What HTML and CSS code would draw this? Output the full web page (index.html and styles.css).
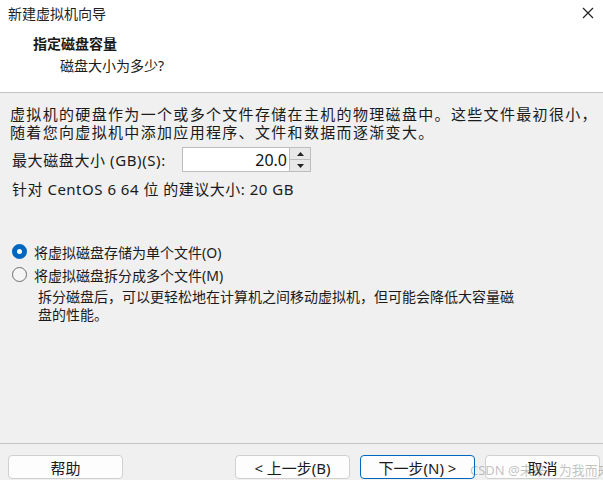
FILE: index.html
```html
<!DOCTYPE html>
<html lang="zh-CN">
<head>
  <meta charset="UTF-8">
  <title>新建虚拟机向导</title>
  <link rel="stylesheet" href="styles.css">
</head>
<body>
  <div class="dialog">
    <header class="top">
      <div class="titlebar">
        <span class="title">新建虚拟机向导</span>
        <svg class="close" width="12" height="12" viewBox="0 0 12 12">
          <path d="M1 1 L11 11 M11 1 L1 11" stroke="#222" stroke-width="1.2" fill="none"/>
        </svg>
      </div>
      <h1 class="heading">指定磁盘容量</h1>
      <p class="sub">磁盘大小为多少?</p>
    </header>

    <main class="content">
      <p class="intro">虚拟机的硬盘作为一个或多个文件存储在主机的物理磁盘中。这些文件最初很小，<br>随着您向虚拟机中添加应用程序、文件和数据而逐渐变大。</p>

      <div class="size-row">
        <label class="size-label">最大磁盘大小 (GB)(S):</label>
        <div class="spin">
          <input class="spin-input" type="text" value="20.0">
          <div class="spin-btns">
            <span class="spin-btn"><svg width="7" height="4" viewBox="0 0 7 4"><path d="M0 4 L3.5 0 L7 4 Z" fill="#222"/></svg></span>
            <span class="spin-btn"><svg width="7" height="4" viewBox="0 0 7 4"><path d="M0 0 L3.5 4 L7 0 Z" fill="#222"/></svg></span>
          </div>
        </div>
      </div>

      <p class="hint">针对 CentOS 6 64 位 的建议大小: 20 GB</p>

      <div class="options">
        <label class="radio">
          <span class="dot checked"></span>
          <span>将虚拟磁盘存储为单个文件(O)</span>
        </label>
        <label class="radio">
          <span class="dot"></span>
          <span>将虚拟磁盘拆分成多个文件(M)</span>
        </label>
        <p class="option-desc">拆分磁盘后，可以更轻松地在计算机之间移动虚拟机，但可能会降低大容量磁<br>盘的性能。</p>
      </div>
    </main>

    <footer class="footer">
      <button class="btn">帮助</button>
      <div class="spacer"></div>
      <button class="btn">&lt; 上一步(B)</button>
      <button class="btn primary">下一步(N) &gt;</button>
      <button class="btn">取消</button>
      <span class="watermark">CSDN @未来，为我而来</span>
    </footer>
  </div>
</body>
</html>
```

FILE: styles.css
```css
body {
  margin: 0;
  background: #f0f0f0;
  font-family: "Noto Sans", "Noto Sans CJK SC", sans-serif;
  color: #1a1a1a;
}

.dialog {
  width: 603px;
  height: 480px;
  display: flex;
  flex-direction: column;
  overflow: hidden;
}

/* top white area */
.top {
  background: #fff;
  height: 93px;
  border-bottom: 1px solid #c4c4c4;
  box-sizing: border-box;
}

.titlebar {
  height: 26px;
  display: flex;
  align-items: center;
  justify-content: space-between;
  padding: 0 8px 0 8px;
}

.title {
  font-size: 14px;
  color: #222;
}

.close {
  margin-right: 1px;
}

.heading {
  margin: 8px 0 0 33px;
  font-size: 14px;
  font-weight: bold;
  line-height: 20px;
}

.sub {
  margin: 2px 0 0 60px;
  font-size: 14px;
  line-height: 20px;
}

/* middle */
.content {
  flex: 1;
  padding: 12px 10px 0 10px;
  font-size: 15px;
}

.intro {
  margin: 0;
  line-height: 18px;
  letter-spacing: 1.33px;
  white-space: nowrap;
}

.size-row {
  display: flex;
  align-items: center;
  margin-top: 6px;
  padding-left: 2px;
}

.size-label {
  width: 170px;
  letter-spacing: 0.6px;
}

.spin {
  display: flex;
  height: 25px;
}

.spin-input {
  width: 107px;
  height: 25px;
  box-sizing: border-box;
  border: 1px solid #bdbdbd;
  border-right: none;
  font: 16px "Noto Sans", sans-serif;
  text-align: right;
  padding: 0 2px;
  color: #111;
  background: #fff;
}

.spin-btns {
  width: 22px;
  display: flex;
  flex-direction: column;
  border: 1px solid #bdbdbd;
  box-sizing: border-box;
}

.spin-btn {
  flex: 1;
  display: flex;
  align-items: center;
  justify-content: center;
  background: #e8e8e8;
}

.spin-btn + .spin-btn {
  border-top: 1px solid #bdbdbd;
}

.hint {
  margin: 7px 0 0 2px;
  line-height: 20px;
  letter-spacing: 0.5px;
}

.options {
  margin-top: 41px;
  padding-left: 2px;
}

.radio {
  display: flex;
  align-items: center;
  gap: 7px;
  height: 23px;
  font-size: 14px;
}

.dot {
  width: 15px;
  height: 15px;
  border-radius: 50%;
  border: 1px solid #6e6e6e;
  box-sizing: border-box;
  background: #f5f5f5;
}

.dot.checked {
  border: 5px solid #0067c0;
  background: #fff;
}

.option-desc {
  margin: 2px 0 0 26px;
  font-size: 14px;
  line-height: 18px;
  white-space: nowrap;
}

/* bottom */
.footer {
  position: relative;
  height: 25px;
  border-top: 1px solid #c4c4c4;
  display: flex;
  align-items: flex-start;
  gap: 10px;
  padding: 11px 3px 0 8px;
}

.spacer {
  flex: 1;
}

.btn {
  width: 115px;
  height: 24px;
  background: #fdfdfd;
  border: 1px solid #d0d0d0;
  border-radius: 4px;
  font: 15px "Noto Sans", "Noto Sans CJK SC", sans-serif;
  color: #1a1a1a;
  padding: 0;
}

.btn.primary {
  border-color: #0067c0;
}

.watermark {
  position: absolute;
  left: 470px;
  top: 16px;
  font-size: 13px;
  color: rgba(120, 120, 120, 0.45);
  white-space: nowrap;
  pointer-events: none;
}
```
